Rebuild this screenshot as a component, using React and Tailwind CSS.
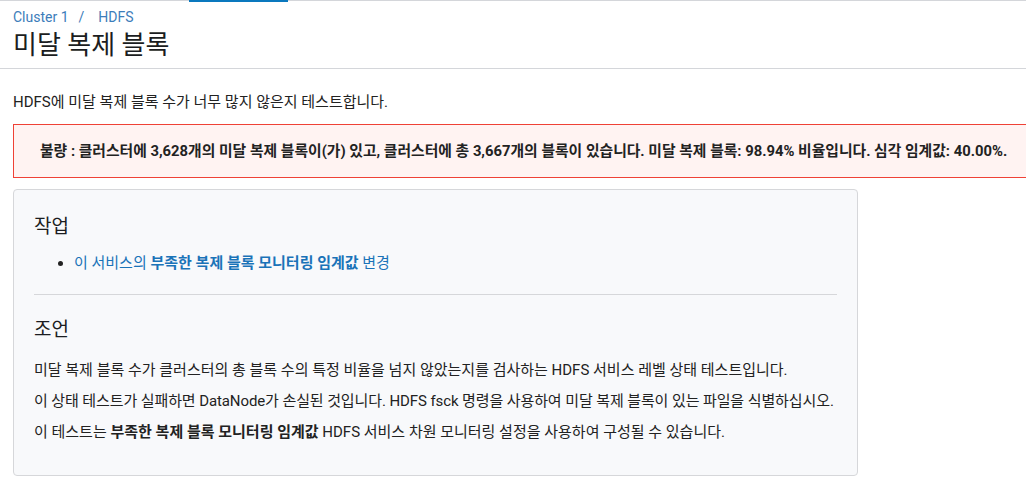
const font = "font-['Roboto','Noto_Sans_CJK_KR',sans-serif]";

export default function App() {
  return (
    <div className={`${font} min-h-[499px] bg-white text-[#1f2328]`}>
      {/* top tab bar strip */}
      <div className="flex h-px bg-[#d4d6da]">
        <div className="ml-[189px] w-[99px] h-[2px] bg-[#0a78be]" />
      </div>

      <header className="px-[13px] pt-[7px] pb-[7px] border-b border-[#d4d6da]">
        <nav className="flex items-center gap-[10px] text-[14px] leading-[18px] text-[#3d7dba]">
          <span>Cluster 1</span>
          <span>/</span>
          <span className="ml-[4px]">HDFS</span>
        </nav>
        <h1 className="mt-[3px] text-[26px] leading-[32px] text-[#1b1d21]">미달 복제 블록</h1>
      </header>

      <main className="pl-[13px] pt-[24px] overflow-hidden">
        <p className="text-[15px] leading-[18px] text-[#222]">
          HDFS에 미달 복제 블록 수가 너무 많지 않은지 테스트합니다.
        </p>

        <div className="mt-[13px] -mr-[4px] h-[54px] flex items-center pl-[26px] bg-[#fff3f2] border border-[#ef4136] whitespace-nowrap">
          <span className="text-[14.8px] font-bold text-[#222]">
            불량 : 클러스터에 3,628개의 미달 복제 블록이(가) 있고, 클러스터에 총 3,667개의 블록이 있습니다. 미달 복제 블록: 98.94% 비율입니다. 심각 임계값: 40.00%.
          </span>
        </div>

        <section className="mt-[11px] w-[845px] h-[287px] rounded-[4px] border border-[#d6d7da] bg-[#f8f9fb] px-[20px] pt-[25px]">
          <h2 className="text-[19px] leading-[24px] text-[#1b1d21]">작업</h2>
          <ul className="mt-[15px] pl-[40px] list-disc text-[15px] leading-[18px] marker:text-[#222]">
            <li className="text-[#1a73b8]">
              이 서비스의 <span className="font-bold">부족한 복제 블록 모니터링 임계값</span> 변경
            </li>
          </ul>
          <div className="mt-[22px] h-px bg-[#d6d7da]" />
          <h2 className="mt-[23px] text-[19px] leading-[24px] text-[#1b1d21]">조언</h2>
          <div className="mt-[19px] flex flex-col gap-[13px] text-[15px] leading-[18px] text-[#222] whitespace-nowrap">
            <p>미달 복제 블록 수가 클러스터의 총 블록 수의 특정 비율을 넘지 않았는지를 검사하는 HDFS 서비스 레벨 상태 테스트입니다.</p>
            <p className="tracking-[-0.1px]">이 상태 테스트가 실패하면 DataNode가 손실된 것입니다. HDFS fsck 명령을 사용하여 미달 복제 블록이 있는 파일을 식별하십시오.</p>
            <p>
              이 테스트는 <span className="font-bold">부족한 복제 블록 모니터링 임계값</span> HDFS 서비스 차원 모니터링 설정을 사용하여 구성될 수 있습니다.
            </p>
          </div>
        </section>
      </main>
    </div>
  );
}
